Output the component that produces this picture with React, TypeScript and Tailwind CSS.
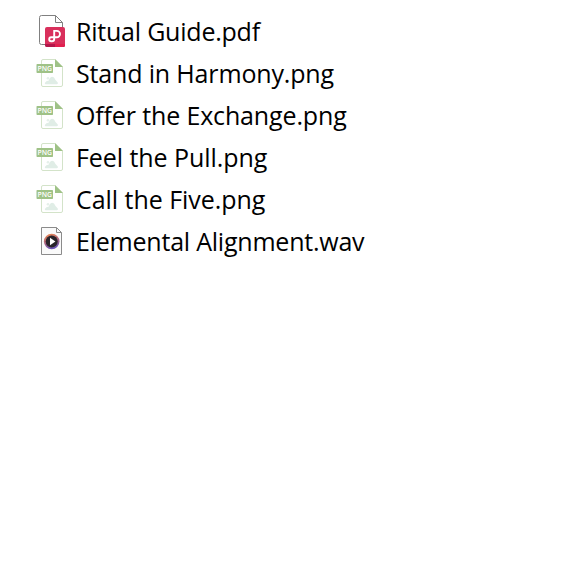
const files = [
    { name: "Ritual Guide.pdf", type: "pdf", spacing: "tracking-[-0.22px]" },
    { name: "Stand in Harmony.png", type: "png", spacing: "tracking-[-0.16px]" },
    { name: "Offer the Exchange.png", type: "png", spacing: "tracking-[-0.14px]" },
    { name: "Feel the Pull.png", type: "png", spacing: "tracking-[-0.06px]" },
    { name: "Call the Five.png", type: "png", spacing: "tracking-[-0.04px]" },
    { name: "Elemental Alignment.wav", type: "wav", spacing: "tracking-[-0.22px]" },
];

function PdfIcon() {
    return (
        <svg className="h-[42px] w-11 shrink-0" viewBox="0 3 44 42" fill="none">
            <path d="M11.5 7.5H25.5L32.5 14.5V36.5H11.5Q9.5 36.5 9.5 34.5V9.5Q9.5 7.5 11.5 7.5Z" fill="#fff" stroke="#808080" />
            <path d="M25.5 7.5V14.5H32.5" stroke="#808080" />
            <rect x="15" y="19" width="20" height="20" rx="2" fill="#d9305c" />
            <path d="M15 36H35V37Q35 39 33 39H17Q15 39 15 37Z" fill="#b3164a" />
            <path d="M25 36H35V37Q35 39 33 39H25Z" fill="#e2204f" />
            <path d="M24.2 31V22.9H26.8A3.2 3.2 0 0 1 26.8 29.3H21.2A2 2 0 0 0 21.2 33.3H22Q24.2 33.3 24.2 31" stroke="#fff" strokeWidth="1.9" />
        </svg>
    );
}

function PngIcon() {
    return (
        <svg className="h-[42px] w-11 shrink-0" viewBox="0 1 44 42" fill="none">
            <path d="M13 7.5H25L32.5 15V33Q32.5 34.5 31 34.5H13Q11.5 34.5 11.5 33V9Q11.5 7.5 13 7.5Z" fill="#fff" stroke="#d3e3c9" />
            <path d="M25 7L33 15H25Z" fill="#9fc287" />
            <path d="M16 32.3Q14.2 32.3 15 30.8Q16.5 28.4 18.6 28.8Q20 24.8 22.3 24.8Q24.2 24.8 25.5 28L27.8 30.6Q28.4 32.3 26.8 32.3Z" fill="#e0ede6" />
            <circle cx="18" cy="26.2" r="1.3" fill="#e5f0ea" />
            <rect x="6.5" y="12" width="16.5" height="9" rx="0.7" fill="#9fc287" />
            <text x="14.8" y="19" textAnchor="middle" fontSize="6.8" fontWeight="600" fill="#fff" fontFamily="Open Sans, sans-serif">PNG</text>
        </svg>
    );
}

function WavIcon() {
    return (
        <svg className="h-[42px] w-11 shrink-0" viewBox="0 1 44 42" fill="none">
            <defs>
                <linearGradient id="ring" x1="0" y1="0" x2="0.3" y2="1">
                    <stop offset="0" stopColor="#f08a4b" />
                    <stop offset="0.5" stopColor="#b86a78" />
                    <stop offset="1" stopColor="#6b55b5" />
                </linearGradient>
            </defs>
            <path d="M11.5 7.5H26.5L31.5 12.5V34.5H11.5Z" fill="#fafafa" stroke="#8b8b8b" />
            <path d="M26.5 7.5V12.5H31.5" stroke="#8b8b8b" />
            <circle cx="21.7" cy="21.5" r="7.8" fill="url(#ring)" />
            <circle cx="21.7" cy="21.5" r="6" fill="#28242a" />
            <path d="M20 17.8L25.4 21.5L20 25.2Z" fill="#fff" />
        </svg>
    );
}

export default function App() {
    return (
        <main className="min-h-screen bg-white pt-[11px] pl-[30px] font-['Open_Sans','Noto_Sans',sans-serif] text-[25px] text-black">
            {files.map((file) => (
                <div key={file.name} className="flex h-[42px] items-center gap-0.5">
                    {file.type === "pdf" && <PdfIcon />}
                    {file.type === "png" && <PngIcon />}
                    {file.type === "wav" && <WavIcon />}
                    <span className={`pb-0.5 leading-10 whitespace-nowrap ${file.spacing}`}>{file.name}</span>
                </div>
            ))}
        </main>
    );
}
